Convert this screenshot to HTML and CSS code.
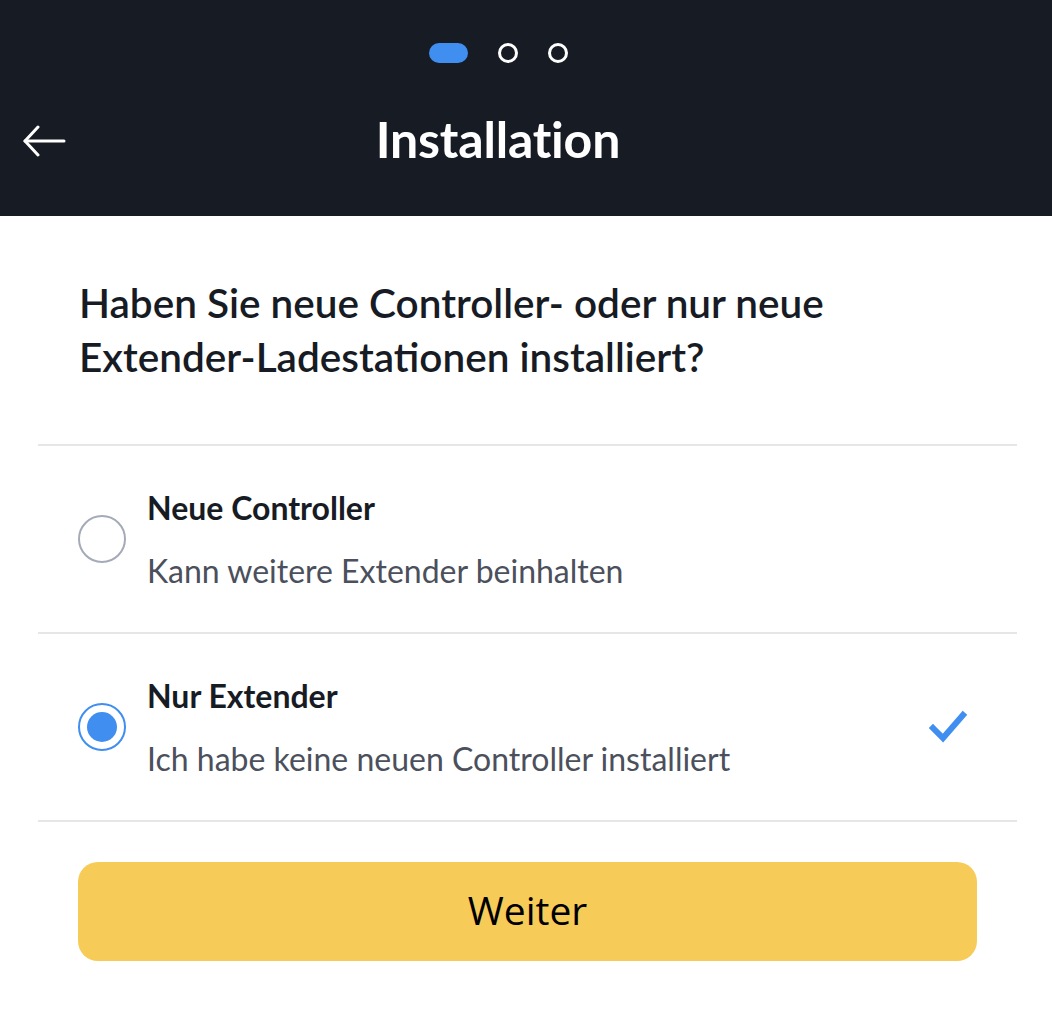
FILE: index.html
```html
<!DOCTYPE html>
<html lang="de">
<head>
<meta charset="utf-8">
<title>Installation</title>
<link rel="stylesheet" href="styles.css">
</head>
<body>
<header class="topbar">
  <div class="steps">
    <span class="step step-active"></span>
    <span class="step"></span>
    <span class="step"></span>
  </div>
  <div class="titlebar">
    <button class="back" aria-label="Zurück">
      <svg width="44" height="32" viewBox="0 0 44 32" fill="none" stroke="#fff" stroke-width="3" stroke-linecap="round" stroke-linejoin="round">
        <path d="M42 16H3"/>
        <path d="M16 2L3 16l13 14"/>
      </svg>
    </button>
    <h1 class="title">Installation</h1>
  </div>
</header>
<main class="content">
  <h2 class="question">Haben Sie neue Controller- oder nur neue Extender-Ladestationen installiert?</h2>
  <ul class="options">
    <li class="option">
      <span class="radio"></span>
      <div class="option-text">
        <div class="option-title">Neue Controller</div>
        <div class="option-sub">Kann weitere Extender beinhalten</div>
      </div>
    </li>
    <li class="option option-selected">
      <span class="radio radio-on"><span class="radio-dot"></span></span>
      <div class="option-text">
        <div class="option-title">Nur Extender</div>
        <div class="option-sub">Ich habe keine neuen Controller installiert</div>
      </div>
      <svg class="check" width="40" height="34" viewBox="0 0 40 34" fill="none" stroke="#3f8ef0" stroke-width="6" stroke-linecap="square" stroke-linejoin="miter">
        <path d="M4 18l10 10L34 5"/>
      </svg>
    </li>
  </ul>
  <button class="next">Weiter</button>
</main>
</body>
</html>
```
FILE: styles.css
```css
* { box-sizing: border-box; }
body {
  margin: 0;
  background: #fff;
  font-family: "Lato", "Noto Sans", sans-serif;
  color: #171b24;
}
.topbar {
  background: #171b24;
  height: 216px;
  padding-top: 43px;
}
.steps {
  display: flex;
  justify-content: center;
  align-items: center;
  gap: 30px;
  height: 20px;
  padding-right: 56px;
}
.step {
  width: 20px;
  height: 20px;
  border: 3.5px solid #fff;
  border-radius: 50%;
}
.step-active {
  width: 39px;
  border: none;
  border-radius: 10px;
  background: #3f8ef0;
}
.titlebar {
  position: relative;
  display: flex;
  justify-content: center;
  align-items: center;
  height: 72px;
  margin-top: 40px;
  padding-right: 56px;
}
.back {
  position: absolute;
  left: 22px;
  top: 22px;
  background: none;
  border: 0;
  padding: 0;
  width: 44px;
  height: 32px;
}
.back svg { display: block; }
.title {
  margin: 0;
  color: #fff;
  font-size: 50px;
  font-weight: 700;
  letter-spacing: -0.2px;
}
.content {
  padding: 60px 35px 0 38px;
}
.question {
  margin: 0 0 60px 41px;
  max-width: 800px;
  font-size: 40.5px;
  line-height: 54px;
  font-weight: 600;
  color: #171b24;
}
.options {
  list-style: none;
  margin: 0;
  padding: 0;
  border-top: 2px solid #e6e6e6;
}
.option {
  display: flex;
  align-items: center;
  height: 188px;
  border-bottom: 2px solid #e6e6e6;
  padding-left: 40px;
  padding-right: 48px;
}
.radio {
  flex: none;
  width: 48px;
  height: 48px;
  border-radius: 50%;
  border: 2px solid #a4aab7;
  display: flex;
  align-items: center;
  justify-content: center;
}
.radio-on { border-color: #3f8ef0; }
.radio-dot {
  width: 30px;
  height: 30px;
  border-radius: 50%;
  background: #3f8ef0;
}
.option-text {
  flex: 1;
  margin-left: 21px;
}
.option-title {
  font-size: 32px;
  font-weight: 700;
  line-height: 40px;
  color: #171b24;
}
.option-sub {
  margin-top: 23px;
  font-size: 32px;
  line-height: 40px;
  color: #4b505c;
}
.check { flex: none; }
.next {
  display: block;
  margin: 40px 0 0 40px;
  width: 899px;
  height: 99px;
  padding: 0 0 4px;
  border: 0;
  border-radius: 20px;
  background: #f7cb58;
  font-family: "Open Sans", "Lato", sans-serif;
  font-size: 39px;
  color: #000;
}
```
